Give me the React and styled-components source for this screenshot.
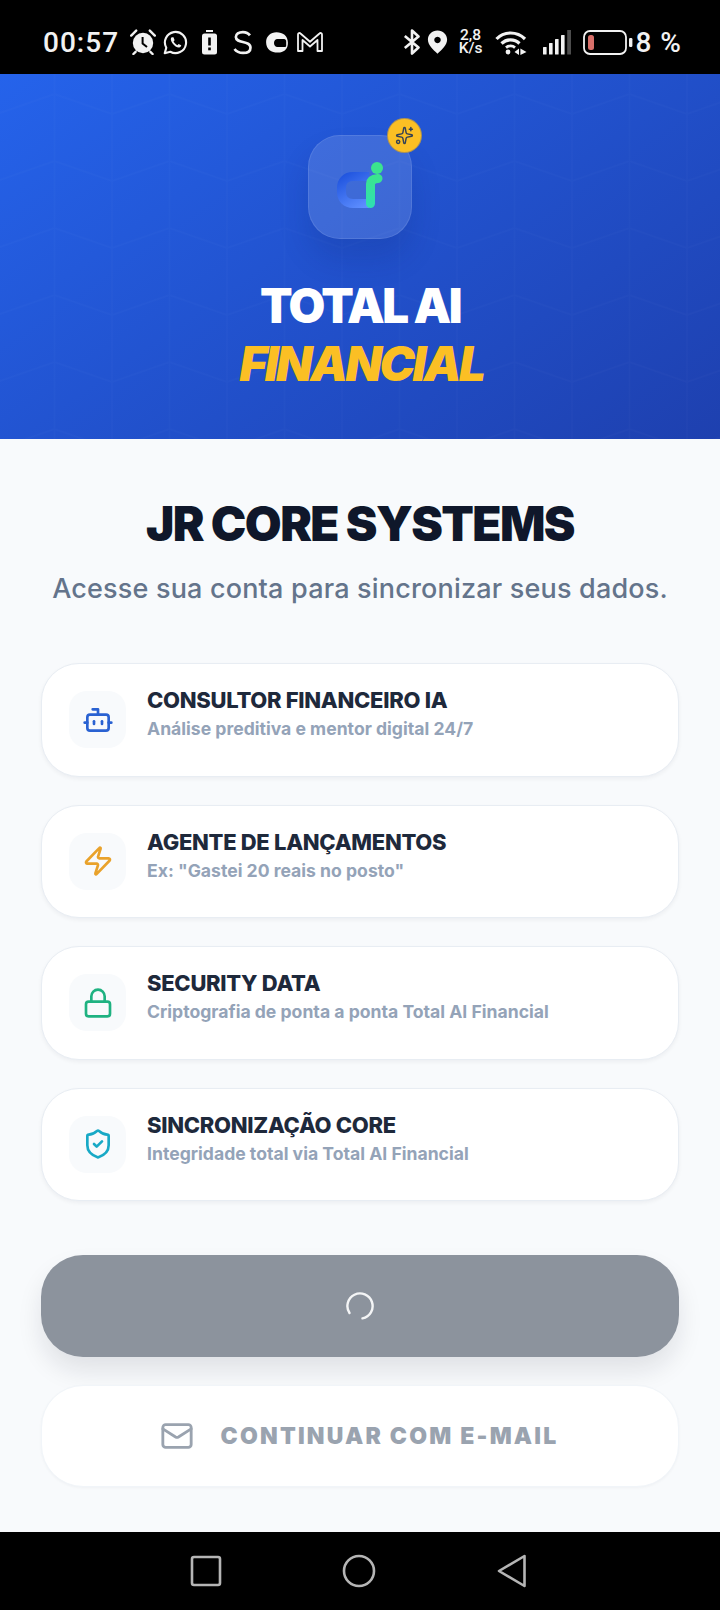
import React from "react";
import styled, { createGlobalStyle } from "styled-components";
import { Bot, Zap, Lock, ShieldCheck, Mail, Sparkles } from "lucide-react";

const Global = createGlobalStyle`
  html, body { margin: 0; padding: 0; background: #000; }
  * { box-sizing: border-box; }
`;

const Page = styled.div`
  width: 720px;
  height: 1610px;
  display: flex;
  flex-direction: column;
  font-family: Inter, "Liberation Sans", sans-serif;
  background: #f8fafc;
  overflow: hidden;
`;

const StatusBar = styled.div`
  height: 74px;
  flex: none;
  background: #000;
  color: #f2f2f2;
  display: flex;
  align-items: center;
  justify-content: space-between;
  padding: 10px 38px 0 43px;
  font-family: Roboto, sans-serif;
`;
const StatusGroup = styled.div`
  display: flex;
  align-items: center;
`;
const StatusSlot = styled.span`
  display: flex;
  margin-left: ${p => p.$left}px;
`;
const Clock = styled.span`
  font-size: 28px;
  font-weight: 500;
  letter-spacing: 1px;
`;
const Speed = styled.span`
  display: flex;
  flex-direction: column;
  align-items: center;
  margin-left: 11px;
  font-size: 15.5px;
  line-height: 13.5px;
  font-weight: 500;
`;
const Percent = styled.span`
  margin-left: 3px;
  font-size: 28px;
  font-weight: 500;
  letter-spacing: 1px;
  white-space: nowrap;
`;

const Hero = styled.header`
  position: relative;
  height: 365px;
  flex: none;
  background: linear-gradient(145deg, #2563eb 0%, #1e40af 100%);
  display: flex;
  flex-direction: column;
  align-items: center;
  padding-top: 61px;
  overflow: hidden;
`;
const HeroPattern = styled.svg`
  position: absolute;
  inset: 0;
  width: 100%;
  height: 100%;
`;
const LogoTile = styled.div`
  position: relative;
  width: 104px;
  height: 104px;
  border-radius: 32px;
  background: rgba(255, 255, 255, 0.13);
  border: 1px solid rgba(255, 255, 255, 0.1);
  box-shadow: 0 20px 30px rgba(15, 30, 100, 0.16);
  display: flex;
  align-items: center;
  justify-content: center;
`;
const Badge = styled.div`
  position: absolute;
  top: -18px;
  right: -11px;
  width: 35px;
  height: 35px;
  border-radius: 50%;
  background: #fbbf24;
  border: 1px solid rgba(30, 64, 175, 0.35);
  color: #334155;
  display: flex;
  align-items: center;
  justify-content: center;
`;
const HeroTitle = styled.h1`
  position: relative;
  margin: 38px 0 0;
  text-align: center;
  font-size: 47.5px;
  line-height: 58px;
  font-weight: 900;
  letter-spacing: -2.5px;
  color: #fff;
`;
const HeroAccent = styled.span`
  display: block;
  margin-left: 3px;
  color: #fbbf24;
  font-style: italic;
`;

const Main = styled.main`
  flex: 1;
  display: flex;
  flex-direction: column;
  padding: 0 41px;
`;
const Brand = styled.h2`
  margin: 57px 0 0;
  text-align: center;
  font-size: 47.6px;
  line-height: 56px;
  font-weight: 900;
  letter-spacing: -1.6px;
  color: #0f172a;
`;
const Lead = styled.p`
  margin: 19px -20px 0;
  text-align: center;
  font-size: 27px;
  line-height: 36px;
  font-weight: 500;
  letter-spacing: 0.18px;
  color: #64748b;
`;
const Features = styled.div`
  margin-top: 56px;
  display: flex;
  flex-direction: column;
  gap: 28px;
`;
const Card = styled.div`
  height: 113.5px;
  border-radius: 38px;
  background: #fff;
  border: 1px solid #e8edf3;
  box-shadow: 0 2px 4px rgba(15, 23, 42, 0.05);
  display: flex;
  align-items: center;
  gap: 21px;
  padding: 0 27px;
`;
const IconBox = styled.div`
  width: 57px;
  height: 57px;
  flex: none;
  border-radius: 18px;
  background: #f8fafc;
  color: ${p => p.$color};
  display: flex;
  align-items: center;
  justify-content: center;
`;
const CardText = styled.div`
  display: flex;
  flex-direction: column;
  margin-top: -12px;
`;
const CardTitle = styled.div`
  font-size: 22px;
  line-height: 31px;
  font-weight: 800;
  letter-spacing: -0.3px;
  color: #1e293b;
`;
const CardDesc = styled.div`
  font-size: 17.6px;
  line-height: 26px;
  font-weight: 700;
  color: #94a3b8;
`;
const Actions = styled.div`
  margin-top: 54px;
  display: flex;
  flex-direction: column;
  gap: 28px;
`;
const LoadingButton = styled.div`
  height: 102px;
  border-radius: 42px;
  background: #8c939d;
  box-shadow: 0 14px 24px rgba(15, 23, 42, 0.1);
  display: flex;
  align-items: center;
  justify-content: center;
`;
const EmailButton = styled.div`
  height: 102px;
  border-radius: 42px;
  background: #fff;
  border: 1px solid #f1f5f9;
  box-shadow: 0 1px 3px rgba(15, 23, 42, 0.04);
  display: flex;
  align-items: center;
  justify-content: center;
  gap: 27px;
  padding-right: 2px;
  color: #9aa3af;
  font-size: 23px;
  font-weight: 900;
  letter-spacing: 2.2px;
`;

const NavBar = styled.nav`
  height: 78px;
  flex: none;
  background: #000;
  display: flex;
  align-items: center;
  justify-content: center;
  padding-right: 2px;
`;
const NavSlot = styled.div`
  width: 153px;
  display: flex;
  justify-content: center;
`;

const Alarm = () => (
  <svg width="26" height="26" viewBox="0 0 26 26" fill="none">
    <circle cx="13" cy="14" r="10.2" fill="#f2f2f2" />
    <path d="M1.2 6.6 L6.2 1.6 M24.8 6.6 L19.8 1.6 M5.6 22.8 L3.4 25 M20.4 22.8 L22.6 25" stroke="#f2f2f2" strokeWidth="2.4" strokeLinecap="round" />
    <path d="M12.6 8 V14.5 L17 18" stroke="#000" strokeWidth="2" fill="none" />
  </svg>
);
const Whatsapp = () => (
  <svg width="25" height="25" viewBox="0 0 26 26" fill="none">
    <path d="M1.8 24.2 L3.4 18.4 A11 11 0 1 1 7.6 22.6 Z" stroke="#f2f2f2" strokeWidth="2.2" strokeLinejoin="round" />
    <path d="M9 7.5 C7.6 8.6 7.8 11 9.8 13.8 C12 16.9 15 18.6 17 18.2 C18.4 17.9 19 16.8 18.9 15.9 L16.2 14.5 L15 15.8 C13.4 15.2 11.6 13.4 11 11.8 L12.1 10.6 L10.9 7.6 Z" fill="#f2f2f2" />
  </svg>
);
const BatteryAlert = () => (
  <svg width="15" height="25" viewBox="0 0 15 25">
    <rect x="4" y="0" width="7" height="2" fill="#f2f2f2" />
    <rect x="0" y="3.5" width="15" height="21" rx="2.5" fill="#f2f2f2" />
    <rect x="6.2" y="7.5" width="2.6" height="8" fill="#000" />
    <rect x="6.2" y="17.5" width="2.6" height="2.8" fill="#000" />
  </svg>
);
const LetterS = () => (
  <svg width="19" height="25" viewBox="0 0 20 25" fill="none">
    <path d="M17.8 5 C16 2.4 13.4 1.5 10.4 1.5 C6 1.5 3 3.5 3 6.8 C3 14 18.4 10 18.4 18 C18.4 21.6 15.3 23.5 10.6 23.5 C6.8 23.5 3.6 22.2 1.6 19.4" stroke="#f2f2f2" strokeWidth="2.8" />
  </svg>
);
const Helmet = () => (
  <svg width="22" height="21" viewBox="0 0 22 21">
    <path d="M10.5 0.2 C16.8 0.2 21.8 3.6 21.9 10.5 C22 16 19.4 19.8 14 20.4 C7 21.2 0.2 18.6 0.1 10.2 C0 4.4 4.6 0.2 10.5 0.2 Z" fill="#f2f2f2" />
    <path d="M11.5 7 H18 C19.4 7 20.2 8 20.2 9.6 V13.4 C20.2 14.6 19.4 15 18.4 15 H11.5 C9.2 15 8 13 8 11 C8 9 9.2 7 11.5 7 Z" fill="#000" />
  </svg>
);
const Gmail = () => (
  <svg width="26" height="20" viewBox="0 0 26 20" fill="none">
    <path d="M1 19 V2.4 C1 1 2.6 0.6 3.5 1.5 L13 9.8 L22.5 1.5 C23.4 0.6 25 1 25 2.4 V19 H20.5 V8 L13 14.5 L5.5 8 V19 Z" stroke="#f2f2f2" strokeWidth="1.8" strokeLinejoin="round" />
  </svg>
);
const Bluetooth = () => (
  <svg width="18" height="26" viewBox="0 0 18 26" fill="none">
    <path d="M1.8 7 L15.5 18.5 L9 24.5 V1.5 L15.5 7.5 L1.8 19" stroke="#f2f2f2" strokeWidth="2.6" strokeLinejoin="round" />
  </svg>
);
const Pin = () => (
  <svg width="21" height="24" viewBox="0 0 21 25">
    <path fillRule="evenodd" d="M10.5 0.5 C16.2 0.5 20.5 4.8 20.5 10 C20.5 15.6 15.4 20.4 10.5 24.8 C5.6 20.4 0.5 15.6 0.5 10 C0.5 4.8 4.8 0.5 10.5 0.5 Z M10.5 7 A3.4 3.4 0 1 0 10.51 7 Z" fill="#f2f2f2" />
  </svg>
);
const Wifi = () => (
  <svg width="32" height="25" viewBox="0 0 32 25" fill="none">
    <path d="M1.5 9 C9 1 22 1 30 9" stroke="#f2f2f2" strokeWidth="3.2" />
    <path d="M6.5 13.5 C11.5 8.6 19.5 8.6 24.5 13.5" stroke="#f2f2f2" strokeWidth="3.2" />
    <path d="M11 17.6 C13.5 15.4 17.5 15.4 20 17.6" stroke="#f2f2f2" strokeWidth="2.8" />
    <circle cx="13" cy="22" r="2.4" fill="#f2f2f2" />
    <path d="M19.5 22 L24 18.6 V25 Z M25.4 18.6 L31.5 22 L25.4 25 Z" fill="#f2f2f2" />
  </svg>
);
const Signal = () => (
  <svg width="28" height="25" viewBox="0 0 28 25">
    <rect x="0" y="17" width="3.6" height="7.5" rx="0.6" fill="#f2f2f2" />
    <rect x="6" y="13" width="3.6" height="11.5" rx="0.6" fill="#f2f2f2" />
    <rect x="12" y="9" width="3.6" height="15.5" rx="0.6" fill="#f2f2f2" />
    <rect x="18" y="5" width="3.6" height="19.5" rx="0.6" fill="#f2f2f2" />
    <rect x="24.2" y="0" width="3.8" height="24.5" fill="#4d4d4d" />
  </svg>
);
const Battery = () => (
  <svg width="50" height="25" viewBox="0 0 50 25" fill="none">
    <rect x="1" y="1" width="42" height="23" rx="6" stroke="#f2f2f2" strokeWidth="1.8" />
    <rect x="5" y="5" width="6" height="15" rx="2.5" fill="#d9706a" />
    <rect x="46" y="8" width="3.4" height="9" rx="1.2" fill="#f2f2f2" />
  </svg>
);
const LogoMark = () => (
  <svg width="50" height="50" viewBox="0 0 50 50" fill="none">
    <defs>
      <linearGradient id="logoC" gradientUnits="userSpaceOnUse" x1="6" y1="10" x2="28" y2="46">
        <stop offset="0" stopColor="#1a4fdc" />
        <stop offset="1" stopColor="#5f8fff" />
      </linearGradient>
      <linearGradient id="logoI" gradientUnits="userSpaceOnUse" x1="36" y1="14" x2="36" y2="46">
        <stop offset="0" stopColor="#3be48e" />
        <stop offset="1" stopColor="#2fdfb4" />
      </linearGradient>
    </defs>
    <path d="M34 14.5 H18 C11 14.5 6.5 19 6.5 26 V30 C6.5 37 11 41.5 18 41.5 H34" stroke="url(#logoC)" strokeWidth="9" />
    <path d="M35.5 41.5 V22 C35.5 19 38 17 43 16.5" stroke="url(#logoI)" strokeWidth="9" strokeLinecap="round" />
    <circle cx="42" cy="6" r="6" fill="#3be48e" />
  </svg>
);
const Spinner = () => (
  <svg width="30" height="30" viewBox="0 0 30 30" fill="none">
    <path d="M4.5 22 A12.6 12.6 0 1 1 17.5 27.4" stroke="#f4f5f6" strokeWidth="2.4" strokeLinecap="round" />
  </svg>
);

const features = [
  { icon: Bot, color: "#2a62d2", title: "CONSULTOR FINANCEIRO IA", desc: "Análise preditiva e mentor digital 24/7" },
  { icon: Zap, color: "#e9a22b", title: "AGENTE DE LANÇAMENTOS", desc: 'Ex: "Gastei 20 reais no posto"' },
  { icon: Lock, color: "#1fb281", title: "SECURITY DATA", desc: "Criptografia de ponta a ponta Total AI Financial" },
  { icon: ShieldCheck, color: "#18a9c6", title: "SINCRONIZAÇÃO CORE", desc: "Integridade total via Total AI Financial" },
];

export default function App() {
  return (
    <Page>
      <Global />
      <StatusBar>
        <StatusGroup>
          <Clock>00:57</Clock>
          <StatusSlot $left={11}><Alarm /></StatusSlot>
          <StatusSlot $left={7}><Whatsapp /></StatusSlot>
          <StatusSlot $left={14}><BatteryAlert /></StatusSlot>
          <StatusSlot $left={16}><LetterS /></StatusSlot>
          <StatusSlot $left={14}><Helmet /></StatusSlot>
          <StatusSlot $left={9}><Gmail /></StatusSlot>
        </StatusGroup>
        <StatusGroup>
          <Bluetooth />
          <StatusSlot $left={6}><Pin /></StatusSlot>
          <Speed><span>2,8</span><span>K/s</span></Speed>
          <StatusSlot $left={12}><Wifi /></StatusSlot>
          <StatusSlot $left={16}><Signal /></StatusSlot>
          <StatusSlot $left={12}><Battery /></StatusSlot>
          <Percent>8 %</Percent>
        </StatusGroup>
      </StatusBar>
      <Hero>
        <HeroPattern viewBox="0 0 720 365" preserveAspectRatio="none">
          <defs>
            <pattern id="hex" x="-3" y="0" width="115" height="67" patternUnits="userSpaceOnUse">
              <path d="M0 40 L57.5 20 L115 40 M57.5 0 V67 M0 0 V67 M115 0 V67" fill="none" stroke="#fff" strokeOpacity="0.014" strokeWidth="1.5" />
            </pattern>
          </defs>
          <rect width="720" height="365" fill="url(#hex)" />
        </HeroPattern>
        <LogoTile>
          <LogoMark />
          <Badge><Sparkles size={19} strokeWidth={1.8} /></Badge>
        </LogoTile>
        <HeroTitle>
          TOTAL AI
          <HeroAccent>FINANCIAL</HeroAccent>
        </HeroTitle>
      </Hero>
      <Main>
        <Brand>JR CORE SYSTEMS</Brand>
        <Lead>Acesse sua conta para sincronizar seus dados.</Lead>
        <Features>
          {features.map(({ icon: Icon, color, title, desc }) => (
            <Card key={title}>
              <IconBox $color={color}><Icon size={32} strokeWidth={2} /></IconBox>
              <CardText>
                <CardTitle>{title}</CardTitle>
                <CardDesc>{desc}</CardDesc>
              </CardText>
            </Card>
          ))}
        </Features>
        <Actions>
          <LoadingButton><Spinner /></LoadingButton>
          <EmailButton><Mail size={34} strokeWidth={2} />CONTINUAR COM E-MAIL</EmailButton>
        </Actions>
      </Main>
      <NavBar>
        <NavSlot>
          <svg width="32" height="32" viewBox="0 0 32 32" fill="none"><rect x="2" y="2" width="28" height="28" rx="2" stroke="#b5b5b5" strokeWidth="2.6" /></svg>
        </NavSlot>
        <NavSlot>
          <svg width="34" height="34" viewBox="0 0 34 34" fill="none"><circle cx="17" cy="17" r="15" stroke="#b5b5b5" strokeWidth="2.6" /></svg>
        </NavSlot>
        <NavSlot>
          <svg width="30" height="34" viewBox="0 0 30 34" fill="none"><path d="M27.5 2 V32 L2 17 Z" stroke="#b5b5b5" strokeWidth="2.6" strokeLinejoin="round" /></svg>
        </NavSlot>
      </NavBar>
    </Page>
  );
}
